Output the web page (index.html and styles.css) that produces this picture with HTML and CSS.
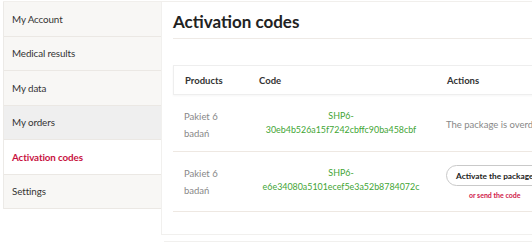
FILE: index.html
```html
<!DOCTYPE html>
<html>
<head>
<link rel="stylesheet" href="styles.css">
</head>
<body>
<div class="page">
  <nav class="sidebar">
    <a class="nav-item" href="#">My Account</a>
    <a class="nav-item" href="#">Medical results</a>
    <a class="nav-item" href="#">My data</a>
    <a class="nav-item hover" href="#">My orders</a>
    <a class="nav-item active" href="#">Activation codes</a>
    <a class="nav-item" href="#">Settings</a>
  </nav>

  <main class="panel">
    <h1>Activation codes</h1>
    <div class="codes">
      <div class="codes-head">
        <div class="col-product">Products</div>
        <div class="col-code">Code</div>
        <div class="col-actions">Actions</div>
      </div>
      <div class="codes-row">
        <div class="col-product">Pakiet 6<br>badań</div>
        <div class="col-code code">SHP6-<br>30eb4b526a15f7242cbffc90ba458cbf</div>
        <div class="col-actions note">The package is overdue</div>
      </div>
      <div class="codes-row">
        <div class="col-product">Pakiet 6<br>badań</div>
        <div class="col-code code">SHP6-<br>e6e34080a5101ecef5e3a52b8784072c</div>
        <div class="col-actions">
          <button class="btn-activate">Activate the package</button>
          <a class="send-link" href="#">or send the code</a>
        </div>
      </div>
    </div>
  </main>
</div>
<div class="next-box"></div>
</body>
</html>
```

FILE: styles.css
```css
* {
  box-sizing: border-box;
}

body {
  margin: 0;
  font-family: Lato, "Open Sans", sans-serif;
  color: #333;
  background: #fff;
  width: 700px;
}

.page {
  display: flex;
  align-items: flex-start;
  margin: 1px 0 0 3px;
  border-top: 1px solid #f1efec;
}

.sidebar {
  width: 158px;
  flex-shrink: 0;
  display: flex;
  flex-direction: column;
  border-left: 1px solid #eceae7;
}

.nav-item {
  display: flex;
  align-items: center;
  height: 34.5px;
  padding-left: 8px;
  font-size: 9.8px;
  letter-spacing: -0.1px;
  color: #333;
  text-decoration: none;
  background: #f8f7f5;
  border-bottom: 1px solid #ebe8e4;
}

.nav-item.hover {
  background: #efefef;
}

.nav-item.active {
  background: #fff;
  color: #c8123f;
  font-weight: 700;
}

.panel {
  flex: 1;
  height: 233px;
  border: 1px solid #f1f0ee;
  border-top: none;
  padding: 0 0 0 11px;
}

h1 {
  margin: 0;
  padding: 9px 0 6px;
  font-size: 17px;
  font-weight: 700;
  color: #222;
  border-bottom: 1px solid #eeeae6;
}

.codes {
  margin-top: 26px;
  width: 400px;
}

.codes-head,
.codes-row {
  display: flex;
}

.codes-head {
  height: 30px;
  align-items: center;
  border: 1px solid #eeeeee;
  box-shadow: 0 1px 2px rgba(0, 0, 0, 0.04);
  font-size: 9.5px;
  font-weight: 700;
  color: #333;
}

.codes-row {
  align-items: flex-start;
  font-size: 9.5px;
  line-height: 17px;
  color: #888;
  border-bottom: 1px solid #eee8e2;
}

.codes-row:nth-child(2) {
  height: 57px;
}

.codes-row:nth-child(3) {
  height: 60px;
}

.col-product {
  width: 74px;
  padding-left: 11px;
  flex-shrink: 0;
}

.codes-row .col-product {
  padding-top: 12.5px;
}

.col-code {
  width: 188px;
  padding-left: 11px;
  flex-shrink: 0;
}

.code {
  padding: 14px 0 0;
  text-align: center;
  font-size: 8.9px;
  color: #3fa535;
  line-height: 14px;
}

.col-actions {
  padding-left: 11px;
  flex-shrink: 0;
  display: flex;
  flex-direction: column;
  align-items: center;
  white-space: nowrap;
}

.codes-row .col-actions {
  padding-top: 13px;
}

.codes-head .col-actions {
  align-items: flex-start;
}

.codes-row .note {
  color: #888;
  align-items: flex-start;
  padding-top: 20.5px;
}

.btn-activate {
  font-family: inherit;
  font-size: 8.3px;
  font-weight: 700;
  color: #222;
  background: #fff;
  height: 21px;
  padding: 0 9px;
  border: 1px solid #c9c9c9;
  border-radius: 11px;
}

.send-link {
  margin-top: 4px;
  font-size: 7px;
  font-weight: 700;
  color: #d0194a;
  text-decoration: none;
  line-height: 10px;
}

.next-box {
  margin: 6px 0 0 164px;
  border-top: 1px solid #f1f0ee;
  height: 10px;
}
```
